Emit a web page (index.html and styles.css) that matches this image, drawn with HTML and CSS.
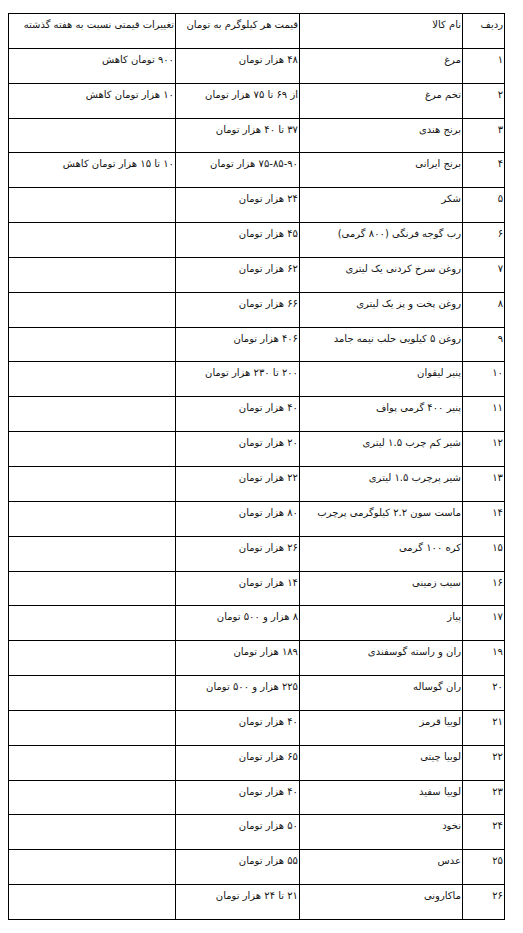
FILE: index.html
```html
<!DOCTYPE html>
<html lang="fa" dir="rtl">
<head>
<meta charset="utf-8">
<title>قیمت کالاها</title>
<link rel="stylesheet" href="styles.css">
</head>
<body>
<div class="page">
<table class="prices">
<colgroup>
<col class="c-no">
<col class="c-name">
<col class="c-price">
<col class="c-change">
</colgroup>
<thead>
<tr><th>ردیف</th><th>نام کالا</th><th>قیمت هر کیلوگرم به تومان</th><th>تغییرات قیمتی نسبت به هفته گذشته</th></tr>
</thead>
<tbody>
<tr><td>۱</td><td>مرغ</td><td>۴۸ هزار تومان</td><td>۹۰۰ تومان کاهش</td></tr>
<tr><td>۲</td><td>تخم مرغ</td><td>از ۶۹ تا ۷۵ هزار تومان</td><td>۱۰ هزار تومان کاهش</td></tr>
<tr><td>۳</td><td>برنج هندی</td><td>۳۷ تا ۴۰ هزار تومان</td><td></td></tr>
<tr><td>۴</td><td>برنج ایرانی</td><td>۷۵-۸۵-۹۰ هزار تومان</td><td>۱۰ تا ۱۵ هزار تومان کاهش</td></tr>
<tr><td>۵</td><td>شکر</td><td>۲۴ هزار تومان</td><td></td></tr>
<tr><td>۶</td><td>رب گوجه فرنگی (۸۰۰ گرمی)</td><td>۴۵ هزار تومان</td><td></td></tr>
<tr><td>۷</td><td>روغن سرخ کردنی یک لیتری</td><td>۶۲ هزار تومان</td><td></td></tr>
<tr><td>۸</td><td>روغن پخت و پز یک لیتری</td><td>۶۶ هزار تومان</td><td></td></tr>
<tr><td>۹</td><td>روغن ۵ کیلویی حلب نیمه جامد</td><td>۴۰۶ هزار تومان</td><td></td></tr>
<tr><td>۱۰</td><td>پنیر لیقوان</td><td>۲۰۰ تا ۲۳۰ هزار تومان</td><td></td></tr>
<tr><td>۱۱</td><td>پنیر ۴۰۰ گرمی پواف</td><td>۴۰ هزار تومان</td><td></td></tr>
<tr><td>۱۲</td><td>شیر کم چرب ۱.۵ لیتری</td><td>۲۰ هزار تومان</td><td></td></tr>
<tr><td>۱۳</td><td>شیر پرچرب ۱.۵ لیتری</td><td>۲۲ هزار تومان</td><td></td></tr>
<tr><td>۱۴</td><td>ماست سون ۲.۲ کیلوگرمی پرچرب</td><td>۸۰ هزار تومان</td><td></td></tr>
<tr><td>۱۵</td><td>کره ۱۰۰ گرمی</td><td>۲۶ هزار تومان</td><td></td></tr>
<tr><td>۱۶</td><td>سیب زمینی</td><td>۱۴ هزار تومان</td><td></td></tr>
<tr><td>۱۷</td><td>پیاز</td><td>۸ هزار و ۵۰۰ تومان</td><td></td></tr>
<tr><td>۱۹</td><td>ران و راسته گوسفندی</td><td>۱۸۹ هزار تومان</td><td></td></tr>
<tr><td>۲۰</td><td>ران گوساله</td><td>۲۲۵ هزار و ۵۰۰ تومان</td><td></td></tr>
<tr><td>۲۱</td><td>لوبیا قرمز</td><td>۴۰ هزار تومان</td><td></td></tr>
<tr><td>۲۲</td><td>لوبیا چیتی</td><td>۶۵ هزار تومان</td><td></td></tr>
<tr><td>۲۳</td><td>لوبیا سفید</td><td>۴۰ هزار تومان</td><td></td></tr>
<tr><td>۲۴</td><td>نخود</td><td>۵۰ هزار تومان</td><td></td></tr>
<tr><td>۲۵</td><td>عدس</td><td>۵۵ هزار تومان</td><td></td></tr>
<tr><td>۲۶</td><td>ماکارونی</td><td>۲۱ تا ۲۴ هزار تومان</td><td></td></tr>
</tbody>
</table>
</div>
</body>
</html>
```

FILE: styles.css
```css
html, body {
  margin: 0;
  padding: 0;
  background: #ffffff;
}

.page {
  padding: 13px 19px 0 8px;
  direction: ltr;
}

.prices {
  direction: rtl;
  width: 496px;
  border-collapse: collapse;
  table-layout: fixed;
  font-family: Tahoma, "DejaVu Sans", sans-serif;
  font-size: 10px;
  line-height: 14px;
  color: #151515;
}

.c-no { width: 42px; }
.c-name { width: 163px; }
.c-price { width: 124px; }
.c-change { width: 167px; }

.prices tr {
  height: 34.85px;
}

.prices th,
.prices td {
  border: 1px solid #000000;
  padding: 4px 1px 0 1px;
  text-align: right;
  vertical-align: top;
  font-weight: normal;
  white-space: nowrap;
  overflow: hidden;
}
```
